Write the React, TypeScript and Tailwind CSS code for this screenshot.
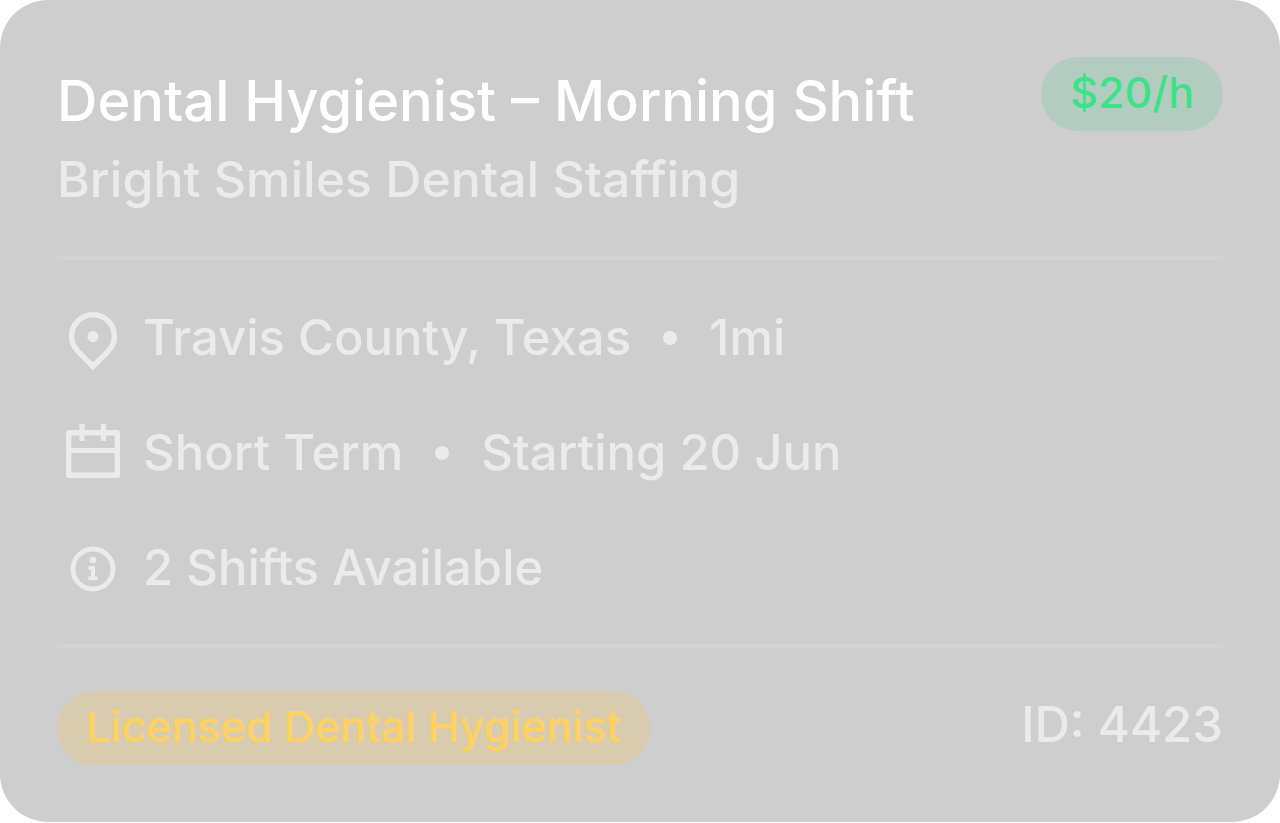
type Props = {
  title: string;
  company: string;
  rate: string;
  role: string;
  id: string;
};

function PinIcon() {
  return (
    <svg className="w-[72px] h-[72px] shrink-0" viewBox="0 0 72 72" fill="none" aria-hidden="true">
      <path d="M36 63.5 20.8 48.2a21.4 21.4 0 1 1 30.4 0Z" stroke="#ebebeb" strokeWidth="5.4" />
      <circle cx="36" cy="33.5" r="5.5" fill="#ebebeb" />
    </svg>
  );
}

function CalendarIcon() {
  return (
    <svg className="w-[72px] h-[72px] shrink-0" viewBox="0 0 72 72" fill="none" aria-hidden="true">
      <path
        d="M11.7 14.7h48.6v42.6H11.7Z"
        stroke="#ebebeb"
        strokeWidth="5.4"
        strokeLinejoin="round"
      />
      <path d="M11.5 32.5h49M25 6v17M46.5 6v17" stroke="#ebebeb" strokeWidth="5.2" />
    </svg>
  );
}

function InfoIcon() {
  return (
    <svg className="w-[72px] h-[72px] shrink-0" viewBox="0 0 72 72" fill="none" aria-hidden="true">
      <circle cx="36" cy="36" r="20" stroke="#ebebeb" strokeWidth="4.8" />
      <circle cx="36" cy="27" r="3.3" fill="#ebebeb" />
      <path d="M31.5 33H38V43.5H40.7V47.3H31.5V43.5H34V37H31.5Z" fill="#ebebeb" />
    </svg>
  );
}

function Dot() {
  return <span className="w-[14px] h-[14px] rounded-full bg-[#ebebeb] mx-8" />;
}

function ShiftCard({ title, company, rate, role, id }: Props) {
  return (
    <article className="w-full rounded-[48px] bg-[#cecece] p-[57px] font-medium text-[#ebebeb] text-[49px] leading-[60px]">
      <header className="flex items-start justify-between">
        <div className="pt-2">
          <h1 className="text-white text-[56px] leading-[72px]">{title}</h1>
          <p className="pt-3 text-[50px]">{company}</p>
        </div>
        <span className="rounded-full bg-[#b2cdbf] text-[#3fe08a] text-[43px] leading-[70px] px-[29px] pb-1">
          {rate}
        </span>
      </header>

      <hr className="mt-[47px] border-t-4 border-[#d3d3d3]" />

      <ul className="mt-[43px] flex flex-col gap-[43px]">
        <li className="flex items-center gap-[14px]">
          <PinIcon />
          <div className="flex items-center pb-0.5">
            Travis County, Texas
            <Dot />
            1mi
          </div>
        </li>
        <li className="flex items-center gap-[14px]">
          <CalendarIcon />
          <div className="flex items-center pb-0.5">
            Short Term
            <Dot />
            Starting 20 Jun
          </div>
        </li>
        <li className="flex items-center gap-[14px]">
          <InfoIcon />
          <p className="pb-0.5">2 Shifts Available</p>
        </li>
      </ul>

      <hr className="mt-[39px] border-t-4 border-[#d3d3d3]" />

      <footer className="mt-[43px] flex items-start justify-between">
        <span className="rounded-full bg-[#d9ccae] text-[#ffd161] text-[43px] leading-[70px] px-[29px] pb-1">
          {role}
        </span>
        <p className="pt-1">{id}</p>
      </footer>
    </article>
  );
}

export default function App() {
  return (
    <main className="bg-white font-['Inter',sans-serif]">
      <ShiftCard
        title="Dental Hygienist – Morning Shift"
        company="Bright Smiles Dental Staffing"
        rate="$20/h"
        role="Licensed Dental Hygienist"
        id="ID: 4423"
      />
    </main>
  );
}
